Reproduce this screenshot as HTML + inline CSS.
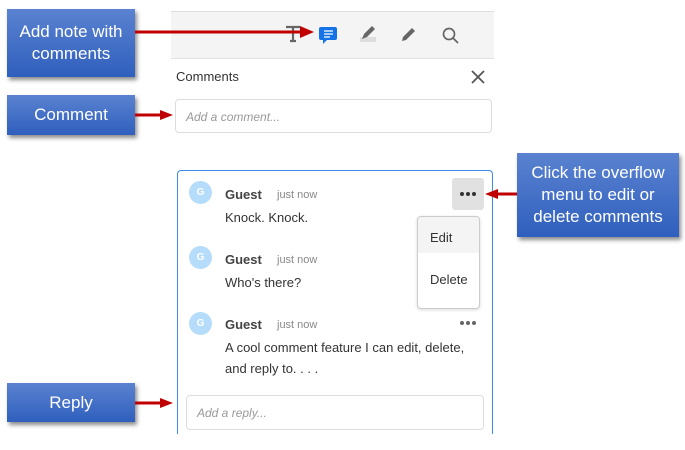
<!DOCTYPE html>
<html><head><meta charset="utf-8"><style>
*{margin:0;padding:0;box-sizing:border-box}
body{width:685px;height:450px;background:#fff;position:relative;overflow:hidden;font-family:"Liberation Sans",sans-serif;color:#333}
.abs{position:absolute}
.call{position:absolute;background:linear-gradient(#5a82d0,#2f5fbd);color:#fff;text-align:center;font-size:17px;line-height:22px;display:flex;align-items:center;justify-content:center;box-shadow:2px 3px 4px rgba(0,0,0,.45)}
.av{position:absolute;width:23px;height:23px;border-radius:50%;background:#b5dcfa;color:#fff;font-size:10px;font-weight:bold;text-align:center;line-height:23px}
.nm{position:absolute;font-size:13px;font-weight:bold;color:#444}
.tm{position:absolute;font-size:11px;color:#888}
.tx{position:absolute;font-size:13px;color:#333;line-height:21px}
</style></head><body>
<div class="abs" style="left:171px;top:11px;width:323px;height:48px;background:#f4f4f4;border-top:1px solid #ddd;border-bottom:1px solid #e2e2e2"></div>
<svg class="abs" style="left:283px;top:24px" width="180" height="22" viewBox="0 0 180 22">
 <path d="M3 3h14M10 3v14M7 17h6" stroke="#666" stroke-width="2.2" fill="none"/>
 <path d="M38 3h14a2 2 0 0 1 2 2v9a2 2 0 0 1-2 2h-8l-4 4v-4h-2a2 2 0 0 1-2-2V5a2 2 0 0 1 2-2z" fill="#1473e6"/>
 <path d="M41 7h9M41 10h9M41 13h6" stroke="#fff" stroke-width="1.3"/>
 <rect x="77" y="13" width="16" height="5" fill="#ddd"/>
 <path d="M79 15l2-5 8-8 3 3-8 8z" fill="#666"/>
 <path d="M119 17l1-4 9-9 3 3-9 9z" fill="#666"/>
 <circle cx="166" cy="10" r="5.5" stroke="#666" stroke-width="1.7" fill="none"/>
 <path d="M170 14l5 5" stroke="#666" stroke-width="1.8"/>
</svg>
<div class="abs" style="left:176px;top:69px;font-size:13px;color:#333">Comments</div>
<svg class="abs" style="left:471px;top:70px" width="14" height="14"><path d="M1 1l12 12M13 1L1 13" stroke="#555" stroke-width="1.8"/></svg>
<div class="abs" style="left:175px;top:99px;width:317px;height:34px;border:1px solid #ddd;border-radius:4px"></div>
<div class="abs" style="left:186px;top:110px;font-size:12px;font-style:italic;color:#999">Add a comment...</div>
<div class="abs" style="left:177px;top:170px;width:316px;height:264px;border:1px solid #3d8ce6;border-bottom:none;border-radius:4px 4px 0 0"></div>
<div class="av" style="left:189px;top:181px">G</div>
<div class="nm" style="left:225px;top:187px">Guest</div>
<div class="tm" style="left:277px;top:189px">just now</div>
<div class="tx" style="left:225px;top:207px">Knock. Knock.</div>
<div class="abs" style="left:452px;top:178px;width:32px;height:32px;background:#e1e1e1;border-radius:3px"></div>
<svg class="abs" style="left:452px;top:178px" width="32" height="32"><g fill="#333"><circle cx="10" cy="16" r="2"/><circle cx="16" cy="16" r="2"/><circle cx="22" cy="16" r="2"/></g></svg>
<div class="av" style="left:189px;top:246px">G</div>
<div class="nm" style="left:225px;top:252px">Guest</div>
<div class="tm" style="left:277px;top:254px">just now</div>
<div class="tx" style="left:225px;top:272px">Who's there?</div>
<div class="abs" style="left:417px;top:216px;width:63px;height:93px;background:#fff;border:1px solid #ccc;border-radius:4px;box-shadow:0 1px 3px rgba(0,0,0,.15)">
 <div style="height:36px;background:#f4f4f4;border-radius:4px 4px 0 0;padding:13px 0 0 12px;font-size:13px">Edit</div>
 <div style="padding:19px 0 0 12px;font-size:13px">Delete</div>
</div>
<div class="av" style="left:189px;top:312px">G</div>
<div class="nm" style="left:225px;top:317px">Guest</div>
<div class="tm" style="left:277px;top:319px">just now</div>
<svg class="abs" style="left:458px;top:318px" width="22" height="10"><g fill="#666"><circle cx="4" cy="5" r="2"/><circle cx="10" cy="5" r="2"/><circle cx="16" cy="5" r="2"/></g></svg>
<div class="tx" style="left:225px;top:337px">A cool comment feature I can edit, delete,<br>and reply to. . . .</div>
<div class="abs" style="left:186px;top:395px;width:298px;height:35px;border:1px solid #ddd;border-radius:4px"></div>
<div class="abs" style="left:197px;top:406px;font-size:12px;font-style:italic;color:#999">Add a reply...</div>
<div class="call" style="left:7px;top:9px;width:128px;height:68px">Add note with<br>comments</div>
<div class="call" style="left:7px;top:95px;width:128px;height:40px">Comment</div>
<div class="call" style="left:517px;top:153px;width:162px;height:84px">Click the overflow<br>menu to edit or<br>delete comments</div>
<div class="call" style="left:7px;top:383px;width:128px;height:39px">Reply</div>
<svg class="abs" style="left:0;top:0" width="685" height="450">
 <g fill="#c00000" stroke="#c00000">
  <path d="M135 32H302" stroke-width="3" fill="none"/><path d="M300 26l14 6-14 6z" stroke="none"/>
  <path d="M135 115H161" stroke-width="3" fill="none"/><path d="M160 110l13 5-13 5z" stroke="none"/>
  <path d="M517 194H497" stroke-width="3" fill="none"/><path d="M498 189l-13 5 13 5z" stroke="none"/>
  <path d="M135 403H161" stroke-width="3" fill="none"/><path d="M160 398l13 5-13 5z" stroke="none"/>
 </g>
</svg>
</body></html>
